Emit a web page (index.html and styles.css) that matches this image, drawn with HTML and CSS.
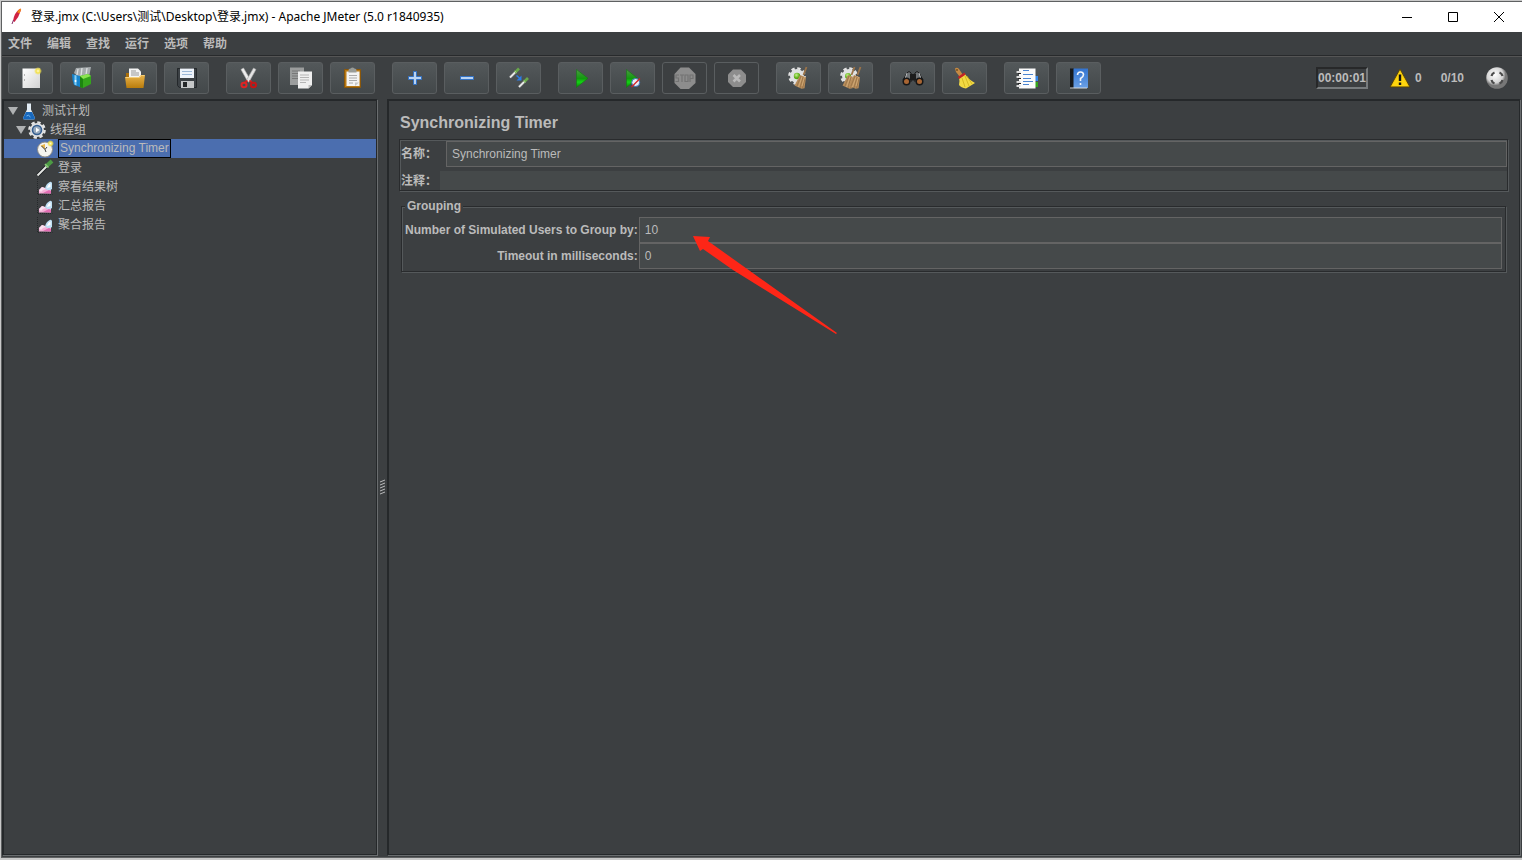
FILE: index.html
```html
<!DOCTYPE html>
<html lang="zh-CN">
<head>
<meta charset="utf-8">
<title>登录.jmx - Apache JMeter</title>
<link rel="stylesheet" href="styles.css">
</head>
<body>
<svg class="defs" aria-hidden="true">
  <defs>
    <linearGradient id="gPaper" x1="0" y1="0" x2="1" y2="1"><stop offset="0" stop-color="#fff"/><stop offset="1" stop-color="#d2d2d2"/></linearGradient>
    <linearGradient id="gFolder" x1="0" y1="0" x2="0" y2="1"><stop offset="0" stop-color="#e9b34b"/><stop offset="1" stop-color="#b97c0c"/></linearGradient>
    <linearGradient id="gPlay" x1="0" y1="0" x2="0" y2="1"><stop offset="0" stop-color="#4c9a44"/><stop offset=".5" stop-color="#129a0e"/><stop offset=".7" stop-color="#14d414"/><stop offset="1" stop-color="#088008"/></linearGradient>
    <linearGradient id="gBook" x1="0" y1="0" x2="0" y2="1"><stop offset="0" stop-color="#3374d0"/><stop offset="1" stop-color="#6aa0e6"/></linearGradient>
    <radialGradient id="gStar"><stop offset="0" stop-color="#fffbd0"/><stop offset=".5" stop-color="#f2e04a"/><stop offset="1" stop-color="#f2e04a" stop-opacity="0"/></radialGradient>
    <radialGradient id="gBall" cx=".4" cy=".35"><stop offset="0" stop-color="#fff"/><stop offset=".75" stop-color="#d4d4d4"/><stop offset="1" stop-color="#777"/></radialGradient>
    <radialGradient id="gGreen" cx=".4" cy=".35"><stop offset="0" stop-color="#c4f28a"/><stop offset="1" stop-color="#55a80e"/></radialGradient>
    <symbol id="gear" viewBox="0 0 18 18"><circle cx="9" cy="9" r="7.600" fill="none" stroke="#e4e4e4" stroke-width="2.400" stroke-dasharray="3.400 2.570"/><circle cx="9" cy="9" r="7" fill="#e0e1e2"/></symbol>
    <symbol id="broom" viewBox="0 0 14 23"><path d="M12.500 1 9.500 9" stroke="#9c7449" stroke-width="1.800"/><path d="M6 9l6 2.200-1.500 11-3 .500L.5 19.500z" fill="#b88d5b"/><path d="M7 10 3 20m6-9-3 11m5-10-2.300 10" stroke="#8c6840" stroke-width=".6"/><path d="M8 11 4.500 21M10.500 11 8 20" stroke="#dfba86" stroke-width=".6"/></symbol>
    <symbol id="chart" viewBox="0 0 18 18"><path d="M1.500 1v15.500h15" fill="none" stroke="#25282a" stroke-dasharray="1 1"/><path d="M3 15.500V12l3-3 3 1 3 2 3-1v4.500z" fill="#f4b2d8"/><path d="M3 12l3-3 3 1 1 1-3 1-2 2z" fill="#fbe0f0"/><path d="M9 10.500Q10 6 13 4.500q2-1.500 3 .5v6q-2 1.500-4 1.500z" fill="#bfe0f6"/><path d="M11 10q1-4 3.500-4.500v3.500z" fill="#fff"/><path d="M7 15l6-3 2 1v2.500z" fill="#e36db4"/></symbol>
    <symbol id="pip" viewBox="0 0 12 12"><path d="M1.500 10.500 7 5" stroke="#8b8d8e" stroke-width="2.600"/><path d="M1.500 10.500 7 5" stroke="#f0f0f0" stroke-width="1.600"/><path d="M6.500 5.500 10.500 1.500" stroke="#69a84b" stroke-width="2.600"/><path d="M6.300 4l1.700 1.700" stroke="#b5e090"/></symbol>
  </defs>
</svg>
<div class="desktop">
<div class="window">
  <header class="titlebar">
    <svg class="feather" viewBox="0 0 14 18"><path d="M9.500 1q2-1 1.500 1Q9 9 4.500 14L3 13Q4 5 9.500 1z" fill="#cf2343"/><path d="M9.500 1q2-1 1.500 1L9.500 5.500 7 4z" fill="#f28a1c"/><path d="M3.500 12 2 16" stroke="#833068"/></svg>
    <span class="title">登录.jmx (C:\Users\测试\Desktop\登录.jmx) - Apache JMeter (5.0 r1840935)</span>
    <div class="winctl">
      <button aria-label="Minimize"><svg viewBox="0 0 12 12"><path d="M1 6.500h10"/></svg></button>
      <button aria-label="Maximize"><svg viewBox="0 0 12 12"><path d="M1.500 1.500h9v9h-9z"/></svg></button>
      <button aria-label="Close"><svg viewBox="0 0 12 12"><path d="M1 1l10 10M11 1 1 11"/></svg></button>
    </div>
  </header>
  <nav class="menubar"><button>文件</button><button>编辑</button><button>查找</button><button>运行</button><button>选项</button><button>帮助</button></nav>
  <div class="toolbar">
    <div class="group">
      <button aria-label="New"><svg viewBox="1 1 43 29"><path d="M14.500 5.500h17.500v19.500h-17.500z" fill="url(#gPaper)"/><path d="M16 12h1m-1 5h1" stroke="#777"/><circle cx="30" cy="8" r="4" fill="url(#gStar)"/></svg></button>
      <button aria-label="Templates"><svg viewBox="1 1 43 29"><path d="M14 10 16 5l15-1-2 10-8 2z" fill="#a6abad"/><path d="M18 6l-1 6m5-7-1 8m6-8-1 7" stroke="#dde0e1" stroke-width="1.300"/><path d="M12 11l8 2v11l-6-2q-2-5-2-11z" fill="#1684cd"/><path d="M14.500 12l2 .500v10l-2-1z" fill="#86cff5"/><path d="M20 13l8-2 3 2v8l-8 4-3-1z" fill="#35a51c"/><path d="M20 13l8-2 3 2-8 3z" fill="#8be450"/><path d="M20 13.500l3 2.500v9l-3-1z" fill="#1c850f"/><circle cx="15.500" cy="18" r="1" fill="#fff"/></svg></button>
      <button aria-label="Open"><svg viewBox="1 1 43 29"><path d="M14 13V10h4l2 2h11v6H14z" fill="#a86e0b"/><path d="M17 5.500h9l3 3V17H17z" fill="#f4f4f4"/><path d="M19 8h5m-5 2h8m-8 2h8" stroke="#999"/><path d="M13 14h14l2-2h4l-1.500 13h-17z" fill="url(#gFolder)"/><path d="M13.500 14.500h14l2-2h3" stroke="#f5cf7a" fill="none"/></svg></button>
      <button aria-label="Save"><svg viewBox="1 1 43 29"><path d="M13 5h20v20H15l-2-2z" fill="#3c4145"/><path d="M13.500 5.500h19v19h-17l-2-2z" stroke="#24282b" fill="none"/><path d="M16 5.500h14V15H16z" fill="#eef3fa"/><path d="M18 8.500h10m-10 3h10" stroke="#9cb8d8"/><path d="M17 18h13v7H17z" fill="#c6c8c9"/><path d="M19 19h4v5h-4z" fill="#25282a"/></svg></button>
    </div>
    <div class="group">
      <button aria-label="Cut"><svg viewBox="1 1 43 29"><path d="M15 6.500 17.500 5 25 18l-3 1z" fill="#ededed" stroke="#b5b5b5" stroke-width=".6"/><path d="M30 6.500 27.500 5 20 18l3 1z" fill="#e4e4e4" stroke="#a5a5a5" stroke-width=".6"/><path d="M21.500 17.500l-2.500 2m4.500-2 2.500 2" stroke="#cf1d1d" stroke-width="2"/><ellipse cx="18" cy="22" rx="2.500" ry="2.300" fill="none" stroke="#e02323" stroke-width="2"/><ellipse cx="27.500" cy="22" rx="2.500" ry="2.300" fill="none" stroke="#c91414" stroke-width="2"/></svg></button>
      <button aria-label="Copy"><svg viewBox="1 1 43 29"><path d="M12 4.500h14V22H12z" fill="#9b9d9d"/><path d="M14 8h8m-8 2.500h8m-8 2.500h6m-6 2.500h6" stroke="#777"/><path d="M20 8.500h14V22l-3.500 3.500H20z" fill="#efefef"/><path d="M22 12h9m-9 2.500h9m-9 2.500h9m-9 2.500h6" stroke="#b5b5b5"/><path d="M30.500 25.500V22H34z" fill="#bdbdbd"/></svg></button>
      <button aria-label="Paste"><svg viewBox="1 1 43 29"><path d="M14.500 6.500h16v18h-16z" fill="#b87914" stroke="#8a570a"/><path d="M16.500 8.500h13v14.500h-13z" fill="#f3f3f3"/><path d="M18.500 7q0-1.500 2-1.500 2-2 4 0 2 0 2 1.500v2.500h-8z" fill="#999c98"/><path d="M19 12.500h8m-8 2.500h8m-8 2.500h8m-8 2.500h4" stroke="#aaa"/><path d="M25 23v-3.500h4z" fill="#c7c7c7"/></svg></button>
    </div>
    <div class="group">
      <button aria-label="Expand"><svg viewBox="1 1 43 29"><path d="M21.500 8.500h3v5h5v3h-5v5h-3v-5h-5v-3h5z" fill="#b9d3f2" stroke="#3372c4"/></svg></button>
      <button aria-label="Collapse"><svg viewBox="1 1 43 29"><path d="M16.500 13.500h13v3h-13z" fill="#b9d3f2" stroke="#3372c4"/></svg></button>
      <button aria-label="Toggle"><svg viewBox="1 1 43 29"><use href="#pip" x="12.500" y="4" width="12" height="12"/><use href="#pip" x="21.500" y="13.500" width="12" height="12"/><path d="M20.500 12.500l3 2.500" stroke="#2c7ce8" stroke-width="1.500"/><path d="M25.500 12.500v5h-5z" fill="#2c7ce8"/></svg></button>
    </div>
    <div class="group">
      <button aria-label="Start"><svg viewBox="1 1 43 29"><path d="M18.500 6.500 30 15.300 18.500 24.500z" fill="url(#gPlay)" stroke="#147a12" stroke-width=".6"/></svg></button>
      <button aria-label="Start no pauses"><svg viewBox="1 1 43 29"><path d="M16.500 6.500 27.500 15.300 16.500 24.500z" fill="url(#gPlay)" stroke="#147a12" stroke-width=".6"/><circle cx="25.700" cy="19.500" r="4" fill="#e9edf5" stroke="#3670b8"/><path d="M21.500 24 30 15.500" stroke="#d62222" stroke-width="1.200"/></svg></button>
      <button class="off" aria-label="Stop"><svg viewBox="1 1 43 29"><path d="M18.500 4.500h8.500l6.500 6.500v9L27 26h-8.500L12.500 20v-9z" fill="#8d8d8d"/><path d="M17 12h-3v3h2.500v3.500h-3M18 12h4m-2 0v7m3-7h3v6.500h-3zm5 7V12h3v3.500h-3" stroke="#737373" stroke-width="1.200" fill="none"/></svg></button>
      <button class="off" aria-label="Shutdown"><svg viewBox="1 1 43 29"><path d="M19 6.500h8l5 5v7.500l-5 5h-8L14 19v-7.500z" fill="#8d8d8d"/><path d="M19.500 12l6.500 6.500m0-6.500-6.500 6.500" stroke="#b9b9b9" stroke-width="2.500"/></svg></button>
    </div>
    <div class="group">
      <button aria-label="Clear"><svg viewBox="1 1 43 29"><use href="#gear" x="12" y="4" width="18" height="18"/><circle cx="21" cy="13" r="3.200" fill="url(#gGreen)"/><use href="#broom" x="18" y="3" width="14" height="23"/></svg></button>
      <button aria-label="Clear all"><svg viewBox="1 1 43 29"><use href="#gear" x="12" y="4" width="18" height="18"/><circle cx="20" cy="13" r="3" fill="url(#gGreen)"/><use href="#broom" x="14" y="3" width="14" height="23"/><use href="#broom" x="20" y="3" width="14" height="23"/></svg></button>
    </div>
    <div class="group">
      <button aria-label="Search"><svg viewBox="1 1 43 29"><path d="M13 17l4-7q2-3 4 0l1 8zM33 17l-4-7q-2-3-4 0l-1 8z" fill="#6f7376" stroke="#151515"/><path d="M20 11h6v6h-6z" fill="#1c1c1c"/><path d="M17 10l-2 6m14-6 2 6" stroke="#b5b8ba"/><circle cx="16.500" cy="18.500" r="4" fill="#171717"/><circle cx="29.500" cy="18.500" r="4" fill="#171717"/><circle cx="16.500" cy="18.500" r="2.500" fill="#a86533"/><circle cx="29.500" cy="18.500" r="2.500" fill="#a86533"/></svg></button>
      <button aria-label="Search reset"><svg viewBox="1 1 43 29"><path d="M13 5.500q2-1.500 4 .5l4 6-3 2-4-5z" fill="#c68a43"/><path d="M17 15l6-4q3 5 10 9l-9 5.500q-5-1-7-3.500 1-4 0-7z" fill="#f2d943"/><path d="M20 15l3 9m0-11 4 10m-2-10 5 8" stroke="#c9a916" stroke-width=".7"/><path d="M16.500 15l6.500-4.500" stroke="#c32424" stroke-width="2.500"/><circle cx="15" cy="7" r="1" fill="#755020"/></svg></button>
    </div>
    <div class="group">
      <button aria-label="Function helper"><svg viewBox="1 1 43 29"><path d="M30 13h4v5h-4z" fill="#3486e8"/><path d="M30 19h4v5h-4z" fill="#35a51c"/><path d="M15 5.500h16.500v20H15z" fill="#fbfbfb"/><path d="M19 7.500h6m-6 4h10m-10 4h8m-8 3h10m-10 3h6" stroke="#4a84d0"/><path d="M12.500 9h4m-4 5h4m-4 5h4m-4 4h4" stroke="#ddd" stroke-width="2"/><path d="M14 10.500h3m-3 5h3m-3 5h3" stroke="#222"/></svg></button>
      <button aria-label="Help"><svg viewBox="1 1 43 29"><path d="M14 5.500h4v20h-4z" fill="#17191b"/><path d="M17.500 5.500H32V25H17.500z" fill="url(#gBook)"/><path d="M14 25h17" stroke="#d4d9de"/><path d="M21.500 12q0-3 3-3t3 2.800q0 2-3 3.700v2.500m0 2v2" stroke="#f2f6fc" stroke-width="1.600" fill="none"/></svg></button>
    </div>
    <div class="status">
      <output class="timer">00:00:01</output>
      <button class="warn"><svg viewBox="0 0 22 20"><path d="M11 1 21 19H1z" fill="#f3c50a" stroke="#55450a"/><path d="M11 3.500 19 18H3z" fill="#ffd60d"/><path d="M11 6.500v6.500m0 1.500V17" stroke="#111" stroke-width="2.400"/></svg>0</button>
      <span class="threads">0/10</span>
      <svg class="ball" viewBox="0 0 22 22"><circle cx="11" cy="11" r="10.800" fill="url(#gBall)"/><path d="M5.500 9Q6 6.500 8.500 5.500M13.500 5.500Q16 6.500 16.500 9M16.500 13Q16 15.500 13.500 16.500M8.500 16.500Q6 15.500 5.500 13" stroke="#4b4b4b" stroke-width="2.200" fill="none"/></svg>
    </div>
  </div>
  <main class="main">
    <aside class="side">
      <ul class="tree">
        <li><div class="row"><i class="tri"></i><svg viewBox="0 0 18 18"><path d="M7 1.500h4v6l4 8.500q0 1.500-2 1.500H5q-2 0-2-1.500L7 7.500z" fill="#e3edf5"/><path d="M6 10h6l3 6q0 1.500-2 1.500H5q-2 0-2-1.500z" fill="#1768bd"/><path d="M6.500 14q2-2 4 1" stroke="#7ebcf0" fill="none"/></svg><span>测试计划</span></div>
          <ul>
            <li><div class="row"><i class="tri"></i><svg viewBox="0 0 18 18"><use href="#gear" width="18" height="18"/><circle cx="9" cy="9" r="4.500" fill="#9aacbf" stroke="#355f91" stroke-width="1.600"/><path d="M8 6.500 11.500 9 8 11.500z" fill="#fff"/></svg><span>线程组</span></div>
              <ul>
                <li><div class="row selected"><svg viewBox="0 0 18 18"><circle cx="9" cy="9.500" r="7.500" fill="#f5f4ef" stroke="#8d8b86"/><path d="M9 9.500V4L4.500 5.500z" fill="#e9b74c"/><path d="M5.500 6l3.500 3.500 2-2.500M9 9.500l1 2.500" stroke="#444" fill="none"/><circle cx="14.500" cy="3.500" r="3.500" fill="url(#gStar)"/></svg><span>Synchronizing Timer</span></div></li>
                <li><div class="row"><svg viewBox="0 0 18 18"><path d="M1.500 16.500 11 7" stroke="#191c1d" stroke-width="3.500"/><path d="M1.500 16.500 11 7" stroke="#e4e6e4" stroke-width="2"/><path d="M10 7.500 16 2" stroke="#4c9a44" stroke-width="4"/><path d="M9 5l3.500 3.500" stroke="#8bc87a" stroke-width="1.500"/></svg><span>登录</span></div></li>
                <li><div class="row"><svg><use href="#chart"/></svg><span>察看结果树</span></div></li>
                <li><div class="row"><svg><use href="#chart"/></svg><span>汇总报告</span></div></li>
                <li><div class="row"><svg><use href="#chart"/></svg><span>聚合报告</span></div></li>
              </ul>
            </li>
          </ul>
        </li>
      </ul>
    </aside>
    <div class="splitter"><svg viewBox="0 0 5 16"><path d="M0 3l5-2M0 6l5-2M0 9l5-2M0 12l5-2M0 15l5-2" stroke="#b9bbbc"/></svg></div>
    <section class="content">
      <h1>Synchronizing Timer</h1>
      <div class="naming">
        <div class="field"><label for="name">名称：</label><input id="name" class="boxed" value="Synchronizing Timer"></div>
        <div class="field comment"><label for="comment">注释：</label><input id="comment"></div>
      </div>
      <fieldset class="grouping">
        <legend>Grouping</legend>
        <label for="users">Number of Simulated Users to Group by:</label><input id="users" class="boxed" value="10">
        <label for="timeout">Timeout in milliseconds:</label><input id="timeout" class="boxed" value="0">
      </fieldset>
      <svg class="arrow" viewBox="0 0 144 98"><path d="M0 0 17 1 15 5 144 97 143 98 40 34 10 13 7 15z" fill="#fe2617"/></svg>
    </section>
  </main>
</div>
</div>
</body>
</html>
```
FILE: styles.css
```css
* { box-sizing: border-box; }
body {
  margin: 0;
  background: #c9c9c9;
  color: #bbb;
  font: 12px/16px "Liberation Sans", "Noto Sans CJK SC", sans-serif;
}
button { font: inherit; color: inherit; background: none; border: 0; padding: 0; }
svg { display: block; flex: none; }
.defs { position: absolute; width: 0; height: 0; }
.desktop { height: 100vh; padding: 1px 0 2px 1px; }
.window {
  height: 100%;
  display: flex;
  flex-direction: column;
  background: #3c3f41;
  border: 1px solid #5f6162;
  border-right: 0;
}

.titlebar { display: flex; align-items: center; height: 30px; background: #fff; color: #000; }
.feather { width: 14px; height: 18px; margin: 0 7px 0 8px; }
.title { flex: 1; font: 12px/16px "Noto Sans", "Noto Sans CJK SC", sans-serif; white-space: nowrap; }
.winctl { display: flex; }
.winctl button { width: 46px; height: 28px; display: flex; align-items: center; justify-content: center; }
.winctl svg { width: 12px; height: 12px; fill: none; stroke: #000; }

.menubar { display: flex; gap: 15px; height: 24px; padding: 0 6px; border-bottom: 1px solid #282a2c; font-weight: bold; }

.toolbar {
  display: flex;
  align-items: center;
  gap: 17px;
  height: 43px;
  padding: 0 14px 0 6px;
  border-top: 1px solid #555;
}
.group { display: flex; gap: 7px; }
.group button {
  width: 45px;
  height: 32px;
  display: flex;
  align-items: center;
  justify-content: center;
  border: 1px solid #5a5e60;
  border-radius: 3px;
  background: linear-gradient(#53585a, #43484a);
}
.group button.off { background: none; }
.group svg { width: 43px; height: 29px; }
.status { display: flex; align-items: center; margin-left: auto; font-weight: bold; }
.timer { width: 52px; height: 22px; line-height: 18px; text-align: center; border: 2px inset #777b7d; }
.warn { display: flex; align-items: center; gap: 4px; margin: 0 19px 0 21px; }
.warn svg { width: 22px; height: 20px; }
.threads { margin-right: 22px; }
.ball { width: 22px; height: 22px; }

.main { flex: 1; min-height: 0; display: flex; padding: 0 1px 1px 0; }
.side {
  width: 375px;
  border: solid #25282a;
  border-width: 2px 1px 1px 2px;
  box-shadow: 1px 1px #6a6d6f;
  margin-bottom: 1px;
}
.tree, .tree ul { list-style: none; margin: 0; padding: 0; }
.tree .row { display: flex; align-items: center; height: 19px; padding-left: 4px; }
.tree .row svg { width: 18px; height: 18px; margin-right: 4px; }
.tree ul .row { padding-left: 12px; }
.tree ul ul .row { padding-left: 32px; }
.tri { border: 5px solid transparent; border-top: 8px solid #afb1b2; border-bottom: 0; margin-right: 2px; }
.row.selected { background: #4b6eaf; }
.row.selected span { border: 1px solid #000; line-height: 17px; height: 19px; padding: 0 1px; }

.splitter { width: 10px; display: flex; align-items: center; justify-content: center; padding-top: 18px; }
.splitter svg { width: 5px; height: 16px; }

.content {
  flex: 1;
  position: relative;
  border: solid #25282a;
  border-width: 2px 1px 1px 2px;
  box-shadow: 1px 1px #6a6d6f;
  margin: 0 1px 1px 0;
  padding: 12px 11px 0 10px;
}
h1 { margin: 0 1px 6px; font-size: 16px; line-height: 20px; }
input {
  flex: 1;
  min-width: 0;
  height: 19px;
  padding: 0 5px;
  border: 0;
  background: #45494a;
  color: #bbb;
  font: inherit;
}
input.boxed { height: 26px; border: 1px solid #646464; }
label, legend { font-weight: bold; }
.naming, .grouping {
  border: 1px solid #292b2d;
  box-shadow: inset 1px 1px #55595b, 1px 1px #55595b;
}
.naming { display: grid; gap: 4px; padding: 1px 0 0 1px; }
.field { display: flex; align-items: center; gap: 9px; }
.comment { gap: 3px; }
.grouping {
  display: grid;
  grid-template-columns: max-content 1fr;
  align-items: center;
  column-gap: 1px;
  margin: 7px 2px 0;
  padding: 3px 3px 2px;
}
.grouping legend { padding: 0 2px; background: #3c3f41; }
.grouping label { text-align: right; }
.arrow { position: absolute; left: 304px; top: 135px; width: 144px; height: 98px; }
```
